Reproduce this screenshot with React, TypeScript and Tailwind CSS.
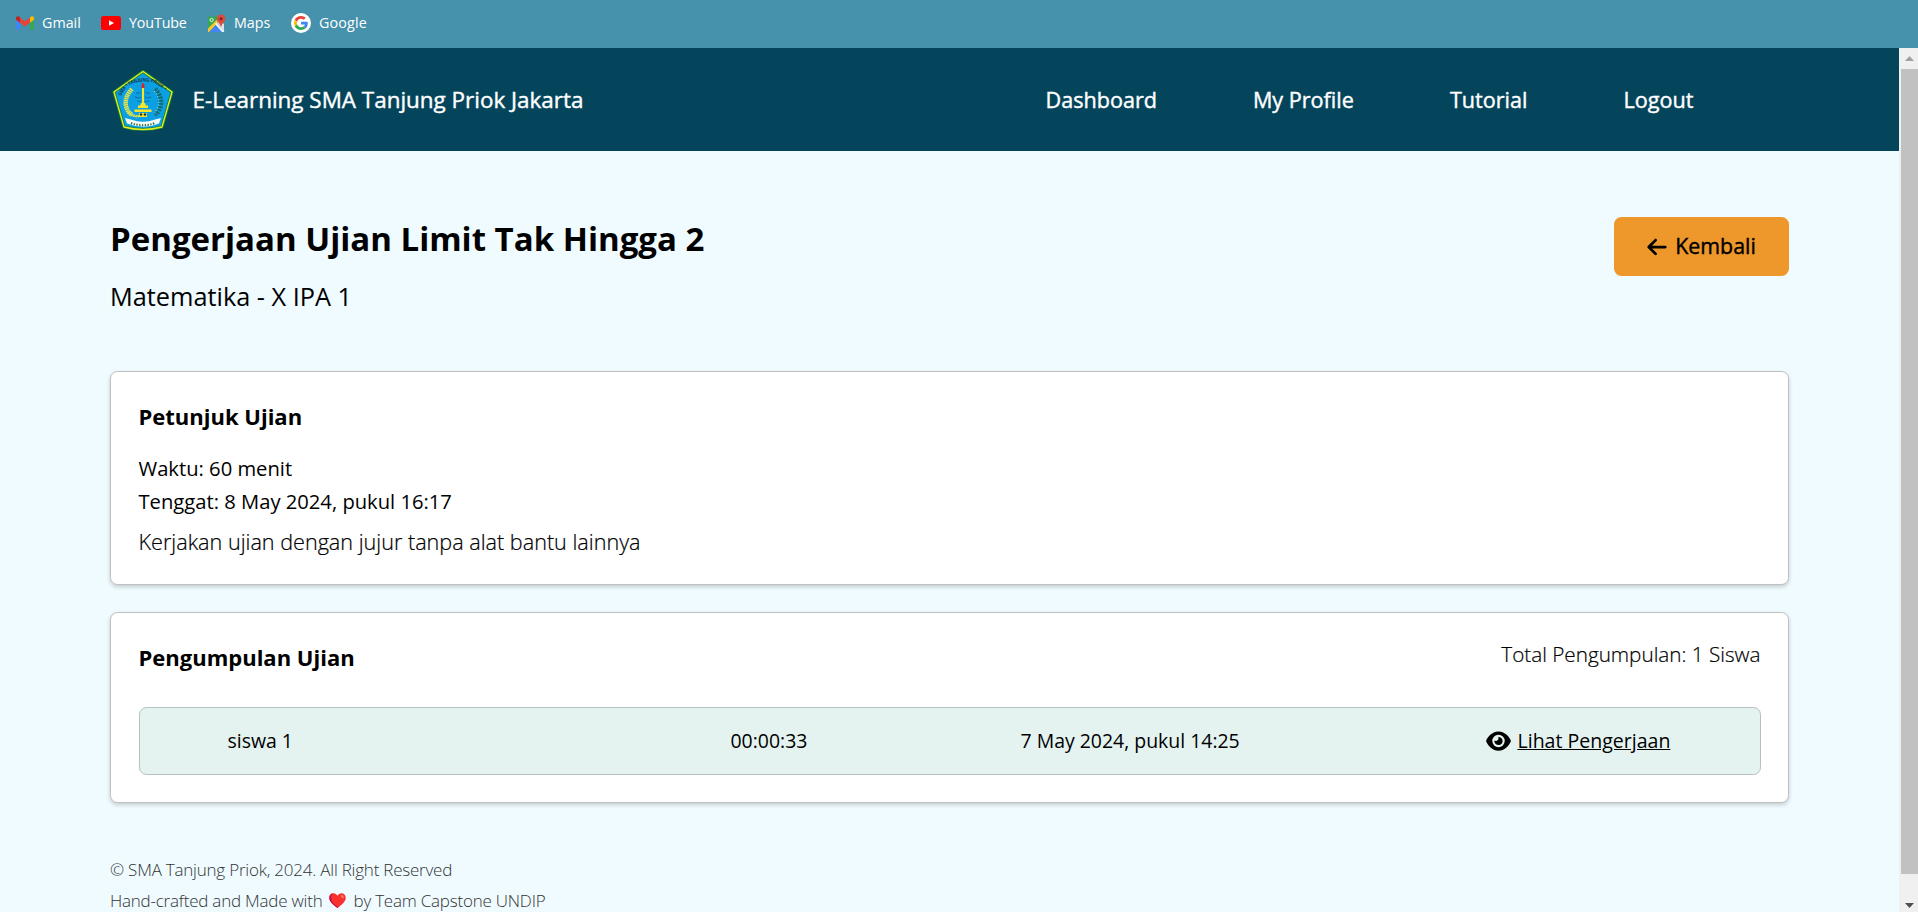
import React from "react";
import { FaArrowLeft, FaEye } from "react-icons/fa6";

function GmailIcon() {
  return (
    <svg className="h-[14px] w-[18px]" viewBox="52 42 88 66">
      <path fill="#4285f4" d="M58 108h14V74L52 59v43c0 3.32 2.69 6 6 6" />
      <path fill="#34a853" d="M120 108h14c3.32 0 6-2.69 6-6V59l-20 15" />
      <path fill="#fbbc04" d="M120 48v26l20-15v-8c0-7.42-8.47-11.65-14.4-7.2" />
      <path fill="#ea4335" d="M72 74V48l24 18 24-18v26L96 92" />
      <path fill="#c5221f" d="M52 51v8l20 15V48l-5.6-4.2c-5.94-4.45-14.4-.22-14.4 7.2" />
    </svg>
  );
}

function YouTubeIcon() {
  return (
    <svg className="h-[14px] w-[20px]" viewBox="0 0 20 14">
      <rect width="20" height="14" rx="2.6" fill="#f00" />
      <path d="M8 4.2 13 7l-5 2.8z" fill="#fff" />
    </svg>
  );
}

function MapsIcon() {
  return (
    <svg className="h-[19px] w-[19px]" viewBox="0 0 19 19">
      <path d="M1 2.5h11v5L1 16z" fill="#34a853" />
      <path d="M1 14.500 9.500 6l2 2L2 18H1z" fill="#fbc62e" />
      <path d="m10.500 9 3-2L17 10v8z" fill="#dfe3e6" />
      <path d="m2.500 18 7-7.500L17 18z" fill="#4285f4" />
      <path d="m9.500 8.500 8 9.500h-2.500L8 10z" fill="#f4f4f4" />
      <circle cx="4.600" cy="6" r="1.600" fill="none" stroke="#e8f5e9" strokeWidth="1" />
      <path d="M14 .5a4.300 4.300 0 0 0-4.300 4.300c0 3 3.500 4.300 4.300 8.700.8-4.400 4.300-5.700 4.300-8.700A4.300 4.300 0 0 0 14 .5" fill="#dd4b3e" />
      <circle cx="14" cy="4.700" r="1.500" fill="#7e2118" />
    </svg>
  );
}

function GoogleIcon() {
  return (
    <svg className="h-[20px] w-[20px]" viewBox="-10 -10 68 68">
      <circle cx="24" cy="24" r="34" fill="#fff" />
      <path fill="#EA4335" d="M24 9.500c3.540 0 6.710 1.220 9.210 3.600l6.850-6.850C35.900 2.380 30.470 0 24 0 14.620 0 6.510 5.380 2.560 13.220l7.980 6.190C12.430 13.720 17.740 9.500 24 9.500z" />
      <path fill="#4285F4" d="M46.980 24.550c0-1.570-.15-3.090-.38-4.550H24v9.020h12.940c-.58 2.960-2.260 5.480-4.780 7.180l7.730 6c4.510-4.180 7.090-10.360 7.090-17.650z" />
      <path fill="#FBBC05" d="M10.530 28.590a14.500 14.500 0 0 1 0-9.180l-7.980-6.190a24 24 0 0 0 0 21.560z" />
      <path fill="#34A853" d="M24 48c6.480 0 11.930-2.130 15.890-5.810l-7.730-6c-2.150 1.450-4.920 2.300-8.160 2.300-6.260 0-11.570-4.220-13.470-9.910l-7.980 6.190C6.510 42.620 14.620 48 24 48z" />
    </svg>
  );
}

function SchoolLogo() {
  return (
    <svg className="mt-[2px] h-[62px] w-[62px] [-webkit-text-stroke:0]" viewBox="0 0 62 62">
      <path d="M31 1.500 60 22 50 57Q31 62 12 57L2 22Z" fill="#0b9fe3" stroke="#15803d" strokeWidth="3" strokeLinejoin="round" />
      <path d="M31 1.500 60 22 50 57Q31 62 12 57L2 22Z" fill="none" stroke="#e5ee22" strokeWidth="1.300" strokeLinejoin="round" />
      <path id="crest-arc" d="M9 26Q15 12 31 11.500T55 25" fill="none" />
      <text fontSize="5" fontWeight="700" fill="#12303c" fontFamily="Liberation Sans, sans-serif">
        <textPath href="#crest-arc" textLength="52" lengthAdjust="spacingAndGlyphs">SMA * TANJUNG PRIOK *</textPath>
      </text>
      <path d="M20 19C12 27 11 38 20 45" fill="none" stroke="#dfe34a" strokeWidth="4.500" strokeDasharray="1.600 .5" />
      <path d="M16 42q5 5 11 4" fill="none" stroke="#dfe34a" strokeWidth="2.500" strokeDasharray="1.600 .5" />
      <path d="M43 19C51 27 51 38 43 45" fill="none" stroke="#146a6c" strokeWidth="4.500" strokeDasharray="2 1.100" />
      <path d="M42 21C49 28 48 37 42 43" fill="none" stroke="#8fdce0" strokeWidth="1.200" strokeDasharray="1 2" />
      <path d="M24 23q3 1 5-1M23 27q4 2 6 0M25 31q3 1 4 0M38 23q-3 1-5-1M39 27q-4 2-6 0M37 31q-3 1-4 0" fill="none" stroke="#1c587c" strokeWidth=".8" />
      <path d="M30 18h2v16h-2z" fill="#f6e62a" />
      <path d="M29.500 18q0-5 1.500-5t1.500 5z" fill="#e02424" />
      <path d="M29 33h4l1 3h-6zM26 35.500h10v2.500H26zM22.500 39.500h17V42h-17z" fill="#f6e62a" />
      <path d="M27 43h8v4h-8z" fill="#f6e62a" />
      <circle cx="29" cy="44.500" r="1.300" fill="#263238" />
      <circle cx="33" cy="44.500" r="1.300" fill="#263238" />
      <path d="m13 48 6 1.500q12 4.500 24 0l6-1.500-2 5.500q-15 6.500-32 0z" fill="#f5f8f5" />
      <path d="M19 53q12 4.500 24 0" fill="none" stroke="#27684c" strokeWidth="2" strokeDasharray="1.300 1.500" />
    </svg>
  );
}

function Heart() {
  return (
    <svg className="mx-[7px] h-[15px] w-[17px]" viewBox="0 0 17 15">
      <path d="M8.500 15C4 11.500.3 8.500.3 4.700.3 2 2.200.3 4.500.3c1.800 0 3.200 1 4 2.500.8-1.500 2.200-2.500 4-2.500 2.300 0 4.200 1.700 4.200 4.400C16.700 8.500 13 11.500 8.500 15z" fill="#f8312f" />
      <path d="M4.500.3C2.200.3.3 2 .3 4.700.3 8.500 4 11.500 8.500 15l.8-.7C4.500 10.800 2.200 8.500 2.200 4.700 2.200 2.400 3 .9 4.500.3" fill="#ca0b4a" />
      <ellipse cx="13.300" cy="3.600" rx="1.300" ry="2" transform="rotate(-35 13.300 3.600)" fill="#f37366" />
    </svg>
  );
}

const bookmarks = [
  { label: "Gmail", icon: <GmailIcon />, box: "w-[85px] gap-[8px]" },
  { label: "YouTube", icon: <YouTubeIcon />, box: "w-[106px] gap-[8px] tracking-[-0.150px]" },
  { label: "Maps", icon: <MapsIcon />, box: "w-[84px] gap-[8px]" },
  { label: "Google", icon: <GoogleIcon />, box: "gap-[8px] tracking-[0.150px]" },
];

export default function App() {
  return (
    <div className="flex h-[912px] w-[1918px] flex-col overflow-hidden bg-[#effbff] font-['Open_Sans',sans-serif] text-black">
      <div className="flex h-[48px] shrink-0 items-center bg-[#4691ac] pb-[2px] pl-[16px] text-[14.300px] text-white">
        {bookmarks.map((b) => (
          <div key={b.label} className={`flex items-center whitespace-nowrap ${b.box}`}>
            {b.icon}
            <span>{b.label}</span>
          </div>
        ))}
      </div>

      <div className="flex min-h-0 flex-1">
        <div className="flex w-[1899px] flex-col overflow-hidden">
          <header className="flex h-[103px] shrink-0 items-center bg-[#04455c] pl-[112px] font-medium text-white [-webkit-text-stroke:0.4px_#fff]">
            <SchoolLogo />
            <span className="ml-[18.500px] w-[853px] text-[22.450px] whitespace-nowrap">E-Learning SMA Tanjung Priok Jakarta</span>
            <nav className="flex gap-[96px] pt-[2px] text-[21.600px] whitespace-nowrap">
              <a>Dashboard</a>
              <a>My Profile</a>
              <a>Tutorial</a>
              <a>Logout</a>
            </nav>
          </header>

          <main className="px-[110px] pt-[66px]">
            <div className="flex h-[154px] items-start justify-between">
              <div>
                <h1 className="text-[33px] leading-[44px] font-bold">Pengerjaan Ujian Limit Tak Hingga 2</h1>
                <p className="mt-[17px] text-[25.300px] leading-[36px]">Matematika - X IPA 1</p>
              </div>
              <button className="flex h-[59px] w-[175px] items-center justify-center gap-[8px] rounded-[7.500px] bg-[#ee982b] text-[21.400px] font-medium [-webkit-text-stroke:0.4px_#000]">
                <FaArrowLeft className="h-[22px] w-[20px]" />
                Kembali
              </button>
            </div>

            <section className="h-[214px] rounded-[7.500px] border border-[#bfbfbf] bg-white px-[27.500px] pt-[29px] shadow-[0_2px_4px_rgba(0,0,0,0.18)]">
              <h2 className="text-[22px] leading-[30px] font-bold">Petunjuk Ujian</h2>
              <p className="mt-[20px] text-[20.200px] leading-[34px]">Waktu: 60 menit</p>
              <p className="text-[20.200px] leading-[32px]">Tenggat: 8 May 2024, pukul 16:17</p>
              <p className="mt-[8px] text-[21.600px] leading-[34px] font-light [-webkit-text-stroke:0.2px_#000]">Kerjakan ujian dengan jujur tanpa alat bantu lainnya</p>
            </section>

            <section className="mt-[27px] h-[191px] rounded-[7.500px] border border-[#bfbfbf] bg-white px-[27.500px] pt-[29px] shadow-[0_2px_4px_rgba(0,0,0,0.18)]">
              <div className="flex h-[65px] items-start justify-between">
                <h2 className="text-[22px] leading-[30px] font-bold">Pengumpulan Ujian</h2>
                <p className="text-[20.700px] leading-[25px] font-light [-webkit-text-stroke:0.2px_#000]">Total Pengumpulan: 1 Siswa</p>
              </div>
              <div className="grid h-[68px] grid-cols-[503px_290px_465px_auto] items-center rounded-[7.500px] border border-[#b5c1bf] bg-[#e4f3f0] pl-[88px] text-[19.450px] whitespace-nowrap">
                <span>siswa 1</span>
                <span>00:00:33</span>
                <span>7 May 2024, pukul 14:25</span>
                <a className="flex items-center gap-[7px]">
                  <FaEye className="h-[22px] w-[25px]" />
                  <span className="text-[19.550px] underline">Lihat Pengerjaan</span>
                </a>
              </div>
            </section>

            <footer className="mt-[51px] text-[17px] leading-[31px] font-light tracking-[-0.220px] text-[#333]">
              <p>© SMA Tanjung Priok, 2024. All Right Reserved</p>
              <p className="flex items-center">
                Hand-crafted and Made with
                <Heart />
                by Team Capstone UNDIP
              </p>
            </footer>
          </main>
        </div>

        <div className="flex w-[19px] flex-col items-end bg-[#f0f0f0]">
          <div className="flex h-[21px] w-[17px] items-center justify-center">
            <svg className="h-[5px] w-[9px]" viewBox="0 0 9 5">
              <path d="M0 5h9L4.500 0z" fill="#a0a0a0" />
            </svg>
          </div>
          <div className="h-[805px] w-[17px] bg-[#c1c1c1]" />
          <div className="flex h-[38px] w-[17px] items-end justify-center pb-[4px]">
            <svg className="h-[5px] w-[9px]" viewBox="0 0 9 5">
              <path d="M0 0h9L4.500 5z" fill="#505050" />
            </svg>
          </div>
        </div>
      </div>
    </div>
  );
}
